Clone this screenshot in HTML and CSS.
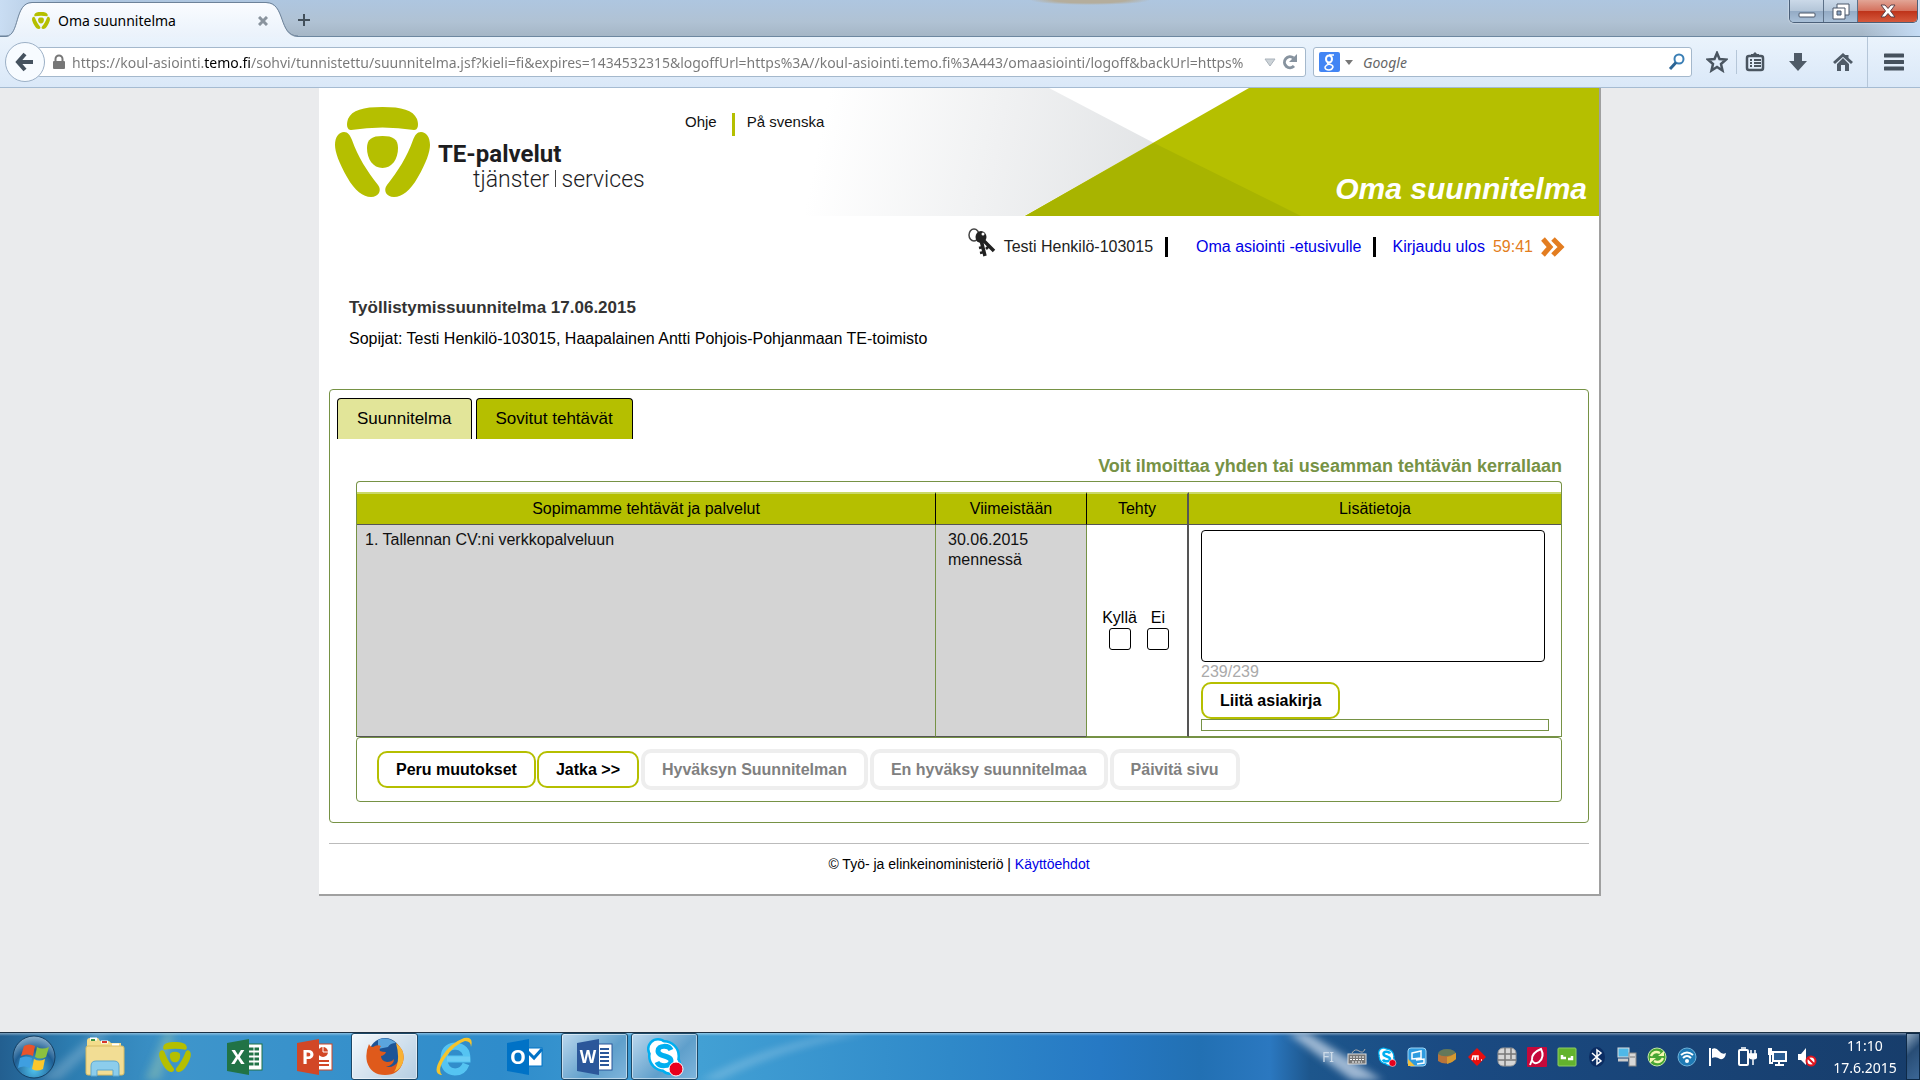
FILE: index.html
```
<!DOCTYPE html>
<html lang="fi">
<head>
<meta charset="utf-8">
<title>Oma suunnitelma</title>
<link rel="stylesheet" href="styles.css">
</head>
<body>
<svg class="defs" aria-hidden="true">
  <symbol id="te-mark" viewBox="0 0 95 90">
    <path d="M16 23C12 23 11 18 13 12C17 3 28 0 47.500 0C67 0 78 3 82 12C84 18 83 23 79 23Q47.500 18 16 23z"/>
    <path d="M9 25C13 25 15 28 17 33C23 50 32 64 43 78C47 83 44 90 36 90C28 90 20 84 12 70C4 56 0 45 0 38C0 30 4 25 9 25z"/>
    <path d="M86 25C82 25 80 28 78 33C72 50 63 64 52 78C48 83 51 90 59 90C67 90 75 84 83 70C91 56 95 45 95 38C95 30 91 25 86 25z"/>
    <path d="M47.500 29C58 29 63 32 63 41C63 52 57 61 47.500 61C38 61 32 52 32 41C32 32 37 29 47.500 29z"/>
  </symbol>
  <symbol id="skype" viewBox="0 0 40 40">
    <circle cx="13" cy="12" r="11" fill="#00aff0"/><circle cx="25" cy="27" r="11" fill="#00aff0"/><circle cx="19" cy="19" r="16" fill="#00aff0"/>
    <circle cx="13" cy="12" r="8.500" fill="#fff"/><circle cx="25" cy="27" r="8.500" fill="#fff"/><circle cx="19" cy="19" r="13.500" fill="#fff"/>
    <path d="M26 13C24 8 13 8 13 14C13 20 26 18 26 24C26 30 14 30 12 25" fill="none" stroke="#00aff0" stroke-width="5"/>
    <circle cx="31" cy="32" r="7" fill="#e8001c" stroke="#fff"/>
  </symbol>
</svg>

<header class="chrome">
  <div class="titlebar">
    <div class="tab">
      <svg class="tab-shape" viewBox="0 0 300 37" aria-hidden="true">
        <defs><linearGradient id="tg" x1="0" y1="0" x2="0" y2="1"><stop offset="0" stop-color="#fafcff"/><stop offset="1" stop-color="#eaf2fb"/></linearGradient></defs>
        <path d="M0 37H6C20 37 14 3 32 3H266C286 3 278 37 298 37z" fill="url(#tg)"/>
        <path d="M0 36H6C20 36 14 2.500 32 2.500H266C286 2.500 278 36 298 36" fill="none" stroke="#6d8299"/>
      </svg>
      <svg class="favicon" fill="#b5bf00" aria-hidden="true"><use href="#te-mark"/></svg>
      <span class="tab-title">Oma suunnitelma</span>
      <button class="plain" aria-label="Sulje välilehti"><svg width="10" height="10" viewBox="0 0 10 10"><path d="M1 1L9 9M9 1L1 9" stroke="#8a949e" stroke-width="3"/></svg></button>
    </div>
    <button class="plain new-tab" aria-label="Uusi välilehti"><svg width="14" height="14" viewBox="0 0 14 14"><path d="M7 1V13M1 7H13" stroke="#424f5a" stroke-width="2"/></svg></button>
    <div class="window-buttons">
      <button aria-label="Pienennä"><svg width="18" height="6" viewBox="0 0 18 6"><rect x="1" y="1" width="16" height="4" rx="1" fill="#fff" stroke="#4b5668"/></svg></button>
      <button aria-label="Palauta"><svg width="18" height="17" viewBox="0 0 18 17"><path d="M5 1H17V12H5z" fill="#fff" stroke="#4b5668"/><path d="M1 5H13V16H1z" fill="#fff" stroke="#4b5668"/><path d="M5 8H9V12H5z" fill="#8ba5c4" stroke="#4b5668"/></svg></button>
      <button class="close" aria-label="Sulje"><svg width="16" height="14" viewBox="0 0 16 14"><path d="M1 1H5L8 4.500L11 1H15L10.500 7L15 13H11L8 9.500L5 13H1L5.500 7z" fill="#fff" stroke="#5b4048"/></svg></button>
    </div>
  </div>
  <div class="toolbar">
    <button class="back" aria-label="Takaisin"><svg width="20" height="20" viewBox="0 0 20 20"><path d="M10 2L3 10L10 18M4 10H18" fill="none" stroke="#45525f" stroke-width="4"/></svg></button>
    <div class="url">
      <svg width="14" height="16" viewBox="0 0 14 16" aria-hidden="true"><path d="M3.500 8V5a3.500 3.500 0 0 1 7 0V8" fill="none" stroke="#777" stroke-width="2"/><rect x="1" y="7" width="12" height="8" rx="1" fill="#777"/></svg>
      <input class="url-field" aria-label="Osoite" value="https://koul-asiointi.temo.fi/sohvi/tunnistettu/suunnitelma.jsf?kieli=fi&amp;expires=1434532315&amp;logoffUrl=https%3A//koul-asiointi.temo.fi%3A443/omaasiointi/logoff&amp;backUrl=https%">
      <svg width="12" height="9" viewBox="0 0 12 9" aria-hidden="true"><path d="M1 1H11L6 8z" fill="#ccd3d8" stroke="#aab3bb"/></svg>
      <button class="plain" aria-label="Päivitä"><svg width="16" height="16" viewBox="0 0 16 16"><path d="M12 12A5.500 5.500 0 1 1 11.500 4" fill="none" stroke="#87939f" stroke-width="3"/><path d="M15 0V8H7z" fill="#87939f"/></svg></button>
    </div>
    <div class="search">
      <svg width="21" height="20" viewBox="0 0 21 20" aria-hidden="true"><rect width="21" height="20" rx="2" fill="#4285f4"/><g fill="none" stroke="#fff"><ellipse cx="10" cy="7" rx="3" ry="3.500" stroke-width="2"/><path d="M10 3H15M9 10Q8 12 10 12Q14 13 14 15Q13 18 10 18Q6 18 6 15Q7 13 10 12" stroke-width="1.500"/></g></svg>
      <svg width="8" height="5" viewBox="0 0 8 5" aria-hidden="true"><path d="M0 0H8L4 5z" fill="#777"/></svg>
      <input class="search-field" aria-label="Haku" placeholder="Google">
      <svg width="18" height="18" viewBox="0 0 18 18" aria-hidden="true"><circle cx="11" cy="6" r="4.500" fill="none" stroke="#3b7fb5" stroke-width="2"/><path d="M8 9.500L2 16" stroke="#2c6494" stroke-width="3"/></svg>
    </div>
    <nav class="tools">
      <button class="plain" aria-label="Kirjanmerkki"><svg width="22" height="22" viewBox="0 0 22 22"><path d="M11 2L13.500 8L20 8.500L15 13L16.500 19.500L11 16L5.500 19.500L7 13L2 8.500L8.500 8z" fill="none" stroke="#4a5560" stroke-width="2.500"/></svg></button>
      <span class="rule"></span>
      <button class="plain" aria-label="Kirjanmerkit"><svg width="20" height="20" viewBox="0 0 20 20"><rect x="2" y="4" width="16" height="14" rx="2" fill="none" stroke="#4a5560" stroke-width="2.500"/><path d="M6 5V2H8L10 0L12 2H14V5z" fill="#4a5560"/><path d="M5 8H7M9 8H16M5 11H7M9 11H16M5 14H7M9 14H16" stroke="#4a5560" stroke-width="2"/></svg></button>
      <button class="plain" aria-label="Lataukset"><svg width="18" height="20" viewBox="0 0 18 20"><path d="M5 1H13V9H18L9 19L0 9H5z" fill="#4f5b67"/></svg></button>
      <button class="plain" aria-label="Koti"><svg width="20" height="20" viewBox="0 0 20 20"><path d="M1 11L10 3L19 11M14 3V6" fill="none" stroke="#4f5b67" stroke-width="3"/><path d="M4 12L10 6L16 12V19H12V13H8V19H4z" fill="#4f5b67"/></svg></button>
      <span class="rule tall"></span>
      <button class="plain" aria-label="Valikko"><svg width="20" height="18" viewBox="0 0 20 18"><path d="M1 2.500H19M1 9H19M1 15.500H19" stroke="#45515d" stroke-width="4" stroke-linecap="round"/></svg></button>
    </nav>
  </div>
</header>

<main class="viewport">
  <div class="page">
    <div class="banner">
      <svg class="banner-art" viewBox="0 0 820 128" preserveAspectRatio="none" aria-hidden="true">
        <defs><linearGradient id="gg" gradientUnits="userSpaceOnUse" x1="30" y1="100" x2="360" y2="170"><stop offset="0" stop-color="#fff"/><stop offset="1" stop-color="#e2e4e6"/></linearGradient></defs>
        <path d="M0 0H270L375 55L245 128H0z" fill="url(#gg)"/>
        <path d="M470 0H820V128H246z" fill="#b5bf00"/>
        <path d="M375 55L522 128H246z" fill="#a8b400"/>
      </svg>
      <a class="brand" href="#">
        <svg class="brand-mark" fill="#b5bf00" aria-hidden="true"><use href="#te-mark"/></svg>
        <span class="brand-text"><strong>TE-palvelut</strong><span>tjänster <i></i> services</span></span>
      </a>
      <nav class="lang"><a href="#">Ohje</a><span></span><a href="#">På svenska</a></nav>
      <h1>Oma suunnitelma</h1>
    </div>

    <div class="user-row">
      <svg width="28" height="30" viewBox="0 0 28 30" aria-hidden="true"><ellipse cx="6" cy="7" rx="5" ry="6" fill="none" stroke="#444" stroke-width="1.500"/><ellipse cx="13" cy="9" rx="5.500" ry="6" fill="#222"/><circle cx="15" cy="6" r="1.500" fill="#fff"/><path d="M14 11L26 23M13 12L17 28" stroke="#222" stroke-width="3.500"/><path d="M18 21L21 18M11 20L15 19M12 25L16 24" stroke="#222" stroke-width="2.500"/></svg>
      <span class="user">Testi Henkilö-103015</span><span class="bar"></span>
      <a class="home-link" href="#">Oma asiointi -etusivulle</a><span class="bar"></span>
      <a href="#">Kirjaudu ulos</a><span class="timer">59:41</span>
      <svg width="24" height="20" viewBox="0 0 24 20" aria-hidden="true"><path d="M2 2L9 10L2 18M12 2L20 10L12 18" fill="none" stroke="#e37d20" stroke-width="5"/></svg>
    </div>

    <section class="intro">
      <h2>Työllistymissuunnitelma 17.06.2015</h2>
      <p>Sopijat: Testi Henkilö-103015, Haapalainen Antti Pohjois-Pohjanmaan TE-toimisto</p>
    </section>

    <section class="panel">
      <div class="tabs"><button class="inactive">Suunnitelma</button><button>Sovitut tehtävät</button></div>
      <div class="panel-body">
        <p class="hint">Voit ilmoittaa yhden tai useamman tehtävän kerrallaan</p>
        <div class="tasks">
          <table>
            <colgroup><col><col class="c-date"><col class="c-done"><col class="c-info"></colgroup>
            <thead><tr><th>Sopimamme tehtävät ja palvelut</th><th>Viimeistään</th><th>Tehty</th><th>Lisätietoja</th></tr></thead>
            <tbody><tr>
              <td class="task">1. Tallennan CV:ni verkkopalveluun</td>
              <td class="date">30.06.2015 mennessä</td>
              <td class="done"><div class="checks"><label>Kyllä<input type="checkbox"></label><label>Ei<input type="checkbox"></label></div></td>
              <td class="info">
                <textarea aria-label="Lisätietoja"></textarea>
                <div class="counter">239/239</div>
                <button class="btn">Liitä asiakirja</button>
                <div class="files"></div>
              </td>
            </tr></tbody>
          </table>
        </div>
        <div class="actions">
          <button class="btn">Peru muutokset</button>
          <button class="btn">Jatka &gt;&gt;</button>
          <button class="btn" disabled>Hyväksyn Suunnitelman</button>
          <button class="btn" disabled>En hyväksy suunnitelmaa</button>
          <button class="btn" disabled>Päivitä sivu</button>
        </div>
      </div>
    </section>

    <footer class="page-footer">© Työ- ja elinkeinoministeriö | <a href="#">Käyttöehdot</a></footer>
  </div>
</main>

<footer class="taskbar">
  <svg class="streaks" viewBox="0 0 1920 48" preserveAspectRatio="none" aria-hidden="true">
    <defs><filter id="soft"><feGaussianBlur stdDeviation="4"/></filter></defs>
    <g filter="url(#soft)"><path d="M40 48L95 0H110L60 48z" fill="#fff" opacity=".2"/><path d="M145 48L165 0H175L160 48z" fill="#cfe9a0" opacity=".3"/><path d="M720 48Q790 12 870 0H840Q760 14 700 48z" fill="#fff" opacity=".2"/><path d="M1288 0H1308L1382 48H1352z" fill="#d5e2f2" opacity=".7"/></g>
  </svg>
  <button class="start" aria-label="Käynnistä"><svg width="44" height="44" viewBox="0 0 44 44">
    <defs><radialGradient id="orb" cx=".5" cy=".8" r=".8"><stop offset="0" stop-color="#4fc3ee"/><stop offset=".6" stop-color="#1f5e94"/><stop offset="1" stop-color="#8fb4cf"/></radialGradient></defs>
    <circle cx="22" cy="22" r="21" fill="url(#orb)" stroke="#153f63"/>
    <path d="M12 11Q17 8 23 11L21 21Q15 18 9 21z" fill="#e8542b"/><path d="M25 12Q30 15 37 12L34 22Q28 25 23 22z" fill="#8cc13f"/><path d="M8 23Q14 20 20 23L18 33Q12 30 6 33z" fill="#3f9fe0"/><path d="M22 24Q27 27 33 24L31 34Q25 37 20 34z" fill="#fcc72c"/>
  </svg></button>
  <button class="app" aria-label="Resurssienhallinta"><svg width="40" height="40" viewBox="0 0 40 40"><path d="M2 4Q2 1 5 1H13L15 4H24L26 6H36V12H2z" fill="#f3dc8b"/><path d="M5 2H12M16 5H23M27 8H34" stroke="#fff" stroke-width="3"/><path d="M6 3H10" stroke="#3d9440" stroke-width="2"/><path d="M17 5H22" stroke="#d8362a" stroke-width="2"/><rect x="1" y="9" width="38" height="29" rx="2" fill="#f2dd94" stroke="#d7bb63"/><path d="M6 39V29Q6 24 11 24H29Q34 24 34 29V39H28V33H12V39z" fill="#8ccdec" stroke="#5da7cf"/></svg></button>
  <button class="app" aria-label="TE-palvelut"><svg width="32" height="30" fill="#b5bf00"><use href="#te-mark"/></svg></button>
  <button class="app" aria-label="Excel"><svg width="36" height="36" viewBox="0 0 36 36"><rect x="18" y="5" width="17" height="26" fill="#fff" stroke="#217346"/><path d="M22 10H32M22 15H32M22 20H32M22 25H32" stroke="#217346" stroke-width="3"/><path d="M27 7V29" stroke="#fff"/><path d="M0 4L22 0V36L0 32z" fill="#217346"/><text x="11" y="25" text-anchor="middle" class="glyph">X</text></svg></button>
  <button class="app" aria-label="PowerPoint"><svg width="36" height="36" viewBox="0 0 36 36"><rect x="18" y="5" width="17" height="26" fill="#fff" stroke="#d24726"/><circle cx="26" cy="13" r="5" fill="#d24726"/><path d="M26 13V7M26 13H32" stroke="#fff"/><path d="M22 22H32M22 26H32" stroke="#d24726" stroke-width="2"/><path d="M0 4L22 0V36L0 32z" fill="#d24726"/><text x="11" y="25" text-anchor="middle" class="glyph">P</text></svg></button>
  <button class="app open active" aria-label="Firefox"><svg width="40" height="38" viewBox="0 0 40 38">
    <circle cx="20" cy="16" r="16" fill="#1d5496"/><path d="M13 2Q22 -2 31 5Q25 5 23 9L13 11z" fill="#5ba5dd"/>
    <path d="M4 6Q5 9 8 9Q12 6 16 8Q14 10 15 13Q17 14 21 14Q20 17 16 18Q16 23 22 24Q27 24 29 21Q29 27 21 29Q30 30 34 22Q36 13 31 5Q41 13 38 24Q34 37 20 37Q6 37 2 24Q0 15 4 6z" fill="#df5a1b"/>
    <path d="M31 5Q41 13 38 24Q36 31 29 34Q36 23 31 5z" fill="#f9b234"/></svg></button>
  <button class="app" aria-label="Internet Explorer"><svg width="40" height="40" viewBox="0 0 40 40"><path d="M31 27Q28 35 20 35Q9 34 9 22Q9 10 20 9Q32 10 32 22H12" fill="none" stroke="#55c4f2" stroke-width="7"/><path d="M12 22H35" stroke="#6bcdf5" stroke-width="5"/><path d="M6 38Q-3 36 6 21Q15 6 29 1Q39 -1 36 10Q36 4 30 4Q20 7 10 21Q2 33 7 38z" fill="#f5c42c"/></svg></button>
  <button class="app" aria-label="Outlook"><svg width="36" height="36" viewBox="0 0 36 36"><rect x="18" y="9" width="17" height="18" fill="#fff" stroke="#0072c6"/><path d="M19 11L27 19L35 10" fill="none" stroke="#0072c6" stroke-width="3"/><path d="M0 4L22 0V36L0 32z" fill="#0072c6"/><text x="11" y="25" text-anchor="middle" class="glyph">O</text></svg></button>
  <button class="app open" aria-label="Word"><svg width="36" height="36" viewBox="0 0 36 36"><rect x="18" y="5" width="17" height="26" fill="#fff" stroke="#2b579a"/><path d="M23 10H32M23 14H32M23 18H32M23 22H32M23 26H32" stroke="#2b579a" stroke-width="2"/><path d="M0 4L22 0V36L0 32z" fill="#2b579a"/><text x="11" y="24" text-anchor="middle" class="glyph small">W</text></svg></button>
  <button class="app open" aria-label="Skype"><svg width="40" height="40"><use href="#skype"/></svg></button>

  <div class="tray">
    <span class="ime">FI</span>
    <svg viewBox="0 0 20 20"><path d="M5 6Q8 1 12 4T18 2" fill="none" stroke="#aaa"/><rect x="1" y="7" width="18" height="10" fill="#777" stroke="#ddd"/><path d="M3 10H17M3 12.500H17M5 15H15" stroke="#fff" stroke-dasharray="2 1"/></svg>
    <svg><use href="#skype"/></svg>
    <svg viewBox="0 0 20 20"><rect x="1" y="1" width="18" height="18" rx="3" fill="#2e9be0" stroke="#9ed5f5"/><path d="M5 6L14 4V11L5 12zM9 13L17 12V16L10 17" fill="none" stroke="#fff" stroke-width="1.500"/><path d="M1 12L8 19H1z" fill="#f0c040"/></svg>
    <svg viewBox="0 0 20 20"><ellipse cx="10" cy="7" rx="9" ry="5" fill="#64785a"/><path d="M1 7Q8 12 19 6V12Q10 20 1 14z" fill="#b8743a"/><path d="M10 10Q15 9 19 6V12Q15 16 10 17z" fill="#d59a31"/></svg>
    <svg viewBox="0 0 20 20"><path d="M10 1L19 10L10 19L1 10z" fill="#e60f0f"/><path d="M5 13L6 9L8 9L8 13L9 9L11 9L11 13M14 13H15" fill="none" stroke="#fff" stroke-width="1.500"/></svg>
    <svg viewBox="0 0 20 20"><rect x="1" y="1" width="18" height="18" rx="5" fill="#d6d6d6" stroke="#999"/><path d="M8 1V19M14 1V12M1 7H19M1 13H19" stroke="#777" stroke-width="1.500"/></svg>
    <svg viewBox="0 0 20 20"><rect width="20" height="20" rx="1" fill="#c5093b"/><path d="M14 2Q4 6 5 13Q7 18 12 15Q18 10 14 2zM5 13L3 18" fill="none" stroke="#fff" stroke-width="2"/></svg>
    <svg viewBox="0 0 20 20"><rect x="1" y="1" width="18" height="18" rx="1" fill="#63b32e" stroke="#8fce63"/><path d="M5 8V11H9M11 12H15V9" fill="none" stroke="#fff" stroke-width="2.500"/></svg>
    <svg viewBox="0 0 20 20"><ellipse cx="10" cy="10" rx="8" ry="10" fill="#0b2d63"/><path d="M5 6L14 14L10 17V3L14 6L5 14" fill="none" stroke="#fff" stroke-width="1.500"/></svg>
    <svg viewBox="0 0 20 20"><rect x="1" y="1" width="11" height="9" fill="#4fb8e8" stroke="#ddd"/><path d="M1 13H11" stroke="#ccc" stroke-width="3"/><rect x="12" y="6" width="7" height="13" fill="#d8d8d8" stroke="#888"/><path d="M13 10H18" stroke="#777"/></svg>
    <svg viewBox="0 0 20 20"><circle cx="10" cy="10" r="9" fill="#48a632" stroke="#c4e8a5"/><path d="M4 9Q7 3 13 6M16 11Q13 17 7 14" fill="none" stroke="#f4f7b0" stroke-width="2.500"/><path d="M11 9H17V4zM9 11H3V16z" fill="#f4f7b0"/></svg>
    <svg viewBox="0 0 20 20"><circle cx="10" cy="10" r="9" fill="#1f7ab5" stroke="#6fb2da"/><path d="M4 8Q10 3 16 8M6 11Q10 7 14 11" fill="none" stroke="#fff" stroke-width="2"/><circle cx="10" cy="14" r="2" fill="#fff"/></svg>
    <svg viewBox="0 0 20 20"><path d="M3 1V19" stroke="#fff" stroke-width="2"/><path d="M5 2Q9 0 12 4Q15 8 19 6Q18 13 13 12Q9 9 5 11z" fill="#fff"/></svg>
    <svg viewBox="0 0 20 20"><rect x="2" y="3" width="9" height="15" rx="1" fill="none" stroke="#fff" stroke-width="2"/><path d="M4 1H9M14 3V7M18 3V7M12 7H20V10Q19 12 16 12Q13 12 12 10zM16 12V18" fill="#fff" stroke="#fff" stroke-width="1.500"/></svg>
    <svg viewBox="0 0 20 20"><rect x="6" y="5" width="13" height="9" fill="#2b5d92" stroke="#fff" stroke-width="2"/><path d="M8 18H17M12 14V18M3 8V16H6" fill="none" stroke="#fff" stroke-width="2"/><rect x="1" y="1" width="4" height="7" fill="#fff"/></svg>
    <svg viewBox="0 0 20 20"><path d="M1 7H4L9 1V18L4 13H1z" fill="#fff"/><circle cx="14" cy="14" r="4.500" fill="#fff" stroke="#e0141e" stroke-width="2"/><path d="M11 11L17 17" stroke="#e0141e" stroke-width="2"/></svg>
    <time class="clock"><span>11:10</span><span>17.6.2015</span></time>
  </div>
  <button class="show-desktop" aria-label="Näytä työpöytä"></button>
</footer>
</body>
</html>
```
FILE: styles.css
```
* { box-sizing: border-box; }
body {
  margin: 0;
  min-height: 100vh;
  display: flex;
  flex-direction: column;
  background: #eaebed;
  color: #000;
  font-family: "Liberation Sans", Arial, sans-serif;
  font-size: 16px;
  line-height: 20px;
}
button, input, textarea { font: inherit; color: inherit; }
svg { display: block; flex: none; }
h1, h2, p { margin: 0; }
.defs { position: absolute; width: 0; height: 0; }
.plain { padding: 0; border: 0; background: none; }

/* Browser frame */
.chrome { font-family: "Noto Sans", "Open Sans", sans-serif; font-size: 14px; }
.titlebar {
  display: flex;
  height: 37px;
  background: linear-gradient(90deg, #c9ddf3 0, transparent 60px), radial-gradient(ellipse 60px 5px at 1090px 0, #b4ad9c 60%, transparent), linear-gradient(90deg, transparent 97%, #c5dcf5), linear-gradient(#aec6e0, #b0c2d4 60%, #a5b6c6);
  border-bottom: 1px solid #6d87a0;
}
.tab {
  position: relative;
  display: flex;
  align-items: center;
  width: 297px;
  padding: 5px 29px 0 32px;
  gap: 8px;
}
.tab > * { position: relative; }
.tab > .tab-shape { position: absolute; left: 0; top: 0; width: 300px; height: 37px; }
.favicon { width: 18px; height: 17px; }
.tab-title { flex: 1; }
.new-tab { padding: 3px 0 0; }
.window-buttons { display: flex; margin: 0 2px 0 auto; height: 23px; border: 1px solid #4b6079; border-top: 0; border-radius: 0 0 5px 5px; overflow: hidden; box-shadow: 0 0 2px #fff; }
.window-buttons button {
  display: grid;
  place-items: center;
  width: 34px;
  padding: 0;
  border: 0;
  border-right: 1px solid #5c7087;
  background: linear-gradient(#cbd9e8, #b3c5d8 50%, #93aac4 50%, #a9c0d8);
}
.window-buttons .close { width: 59px; border: 0; background: linear-gradient(#e2a596, #d4705c 50%, #be3219 50%, #d5593c); }
.window-buttons button:first-child { padding-top: 8px; }
.toolbar {
  display: flex;
  align-items: center;
  height: 51px;
  padding-left: 5px;
  background: linear-gradient(#eaf3fc, #dae8f8);
  border-bottom: 1px solid #a5bbd2;
}
.back { z-index: 1; display: grid; place-items: center; width: 40px; height: 40px; padding: 0; border: 1px solid #9cb0c6; border-radius: 50%; background: #f7fbff; }
.url, .search { display: flex; align-items: center; height: 30px; border: 1px solid #a4b8cc; border-radius: 3px; background: #fff; }
.url { flex: 1; margin-left: -8px; padding: 0 7px 0 14px; gap: 6px; }
.url-field, .search-field { flex: 1; min-width: 0; height: 28px; padding: 0; border: 0; outline: 0; }
/* The host name is darker than the rest of the address */
.url-field {
  color: transparent;
  background: linear-gradient(90deg, #777 132px, #000 132px, #000 179px, #777 179px);
  background-clip: text;
  -webkit-background-clip: text;
}
.search { width: 379px; margin: 0 14px 0 7px; padding: 0 5px; gap: 5px; }
.search-field { padding-left: 5px; font-style: italic; background: none; }
.search-field::placeholder { color: #666; opacity: 1; }
.tools { display: flex; align-items: center; align-self: stretch; padding-right: 16px; }
.tools .rule { width: 1px; height: 24px; margin: 0 8px; background: #b5c6d8; }
.tools .rule + button { margin-right: 24px; }
.tools .rule.tall { height: 50px; margin: 0 16px 0 14px; }
.tools .rule.tall + button { margin: 0; }
.tools button:nth-of-type(3) { margin-right: 26px; }

/* Page */
.viewport { flex: 1; }
.page { max-width: 1282px; margin: 0 auto; padding-bottom: 20px; background: #fff; border: solid #a0a0a0; border-width: 0 2px 2px 0; }
.banner { position: relative; display: flex; height: 128px; }
.banner > * { position: relative; }
.banner > .banner-art { position: absolute; right: 0; top: 0; width: 820px; height: 128px; }
.banner h1 { align-self: flex-end; margin-left: auto; padding: 0 12px 10px 0; color: #fff; font-size: 30px; line-height: 34px; font-style: italic; }
.brand { display: flex; width: 366px; padding: 19px 0 0 16px; gap: 8px; color: #1d1d1f; text-decoration: none; }
.brand-mark { width: 95px; height: 90px; }
.brand-text { display: flex; flex-direction: column; padding-top: 35px; font-family: Roboto, sans-serif; font-size: 24px; line-height: 25px; white-space: nowrap; }
.brand-text > span { padding-left: 35px; font-size: 23px; font-weight: 300; }
.brand-text i { display: inline-block; width: 1px; height: 17px; background: #444; }
.lang { display: flex; align-items: flex-start; padding-top: 24px; gap: 12px; font-size: 15px; }
.lang span { width: 3px; height: 23px; margin: 1px 0 0 3px; background: #b5bf00; }
.lang a { color: #111; }
a { color: #0000e6; text-decoration: none; }
.user-row { display: flex; justify-content: flex-end; align-items: center; padding: 12px 34px 0 0; color: #222; }
.user-row > :not(svg:first-child) { margin-top: 7px; }
.user { margin-left: 8px; }
.bar { width: 3px; height: 20px; margin: 0 16px 0 12px; background: #000; }
.home-link { margin-left: 12px; }
.timer { margin: 0 8px; color: #e37d20; }
.intro { padding: 40px 30px 0; }
.intro h2 { color: #333; font-size: 17px; line-height: 20px; }
.intro p { padding-top: 11px; }
.panel { margin: 40px 10px 0; padding: 8px 7px 20px; border: 1px solid #769245; border-radius: 4px; }
.tabs { display: flex; gap: 4px; }
.tabs button { height: 41px; padding: 0 19px; border: 1px solid #000; border-bottom: 0; border-radius: 4px 4px 0 0; background: #b5bf00; font-size: 17px; }
.tabs .inactive { background: #e2e599; }
.panel-body { padding: 17px 19px 0; }
.hint { padding-bottom: 5px; color: #769245; font-size: 18px; font-weight: bold; text-align: right; }
.tasks { padding-top: 10px; border: 1px solid #769245; border-bottom: 0; border-radius: 4px 4px 0 0; }
table { width: 100%; table-layout: fixed; border-collapse: separate; border-spacing: 0; }
.c-date { width: 151px; }
.c-done { width: 102px; }
.c-info { width: 372px; }
th { height: 33px; padding: 0; border-top: 2px solid #cad969; border-bottom: 1px solid #555; border-right: 1px solid #000; background: #b5bf00; font-weight: normal; }
th:nth-child(3) { border-right: 2px solid #555; }
th:last-child { border-right: 0; }
td { padding: 5px 12px; vertical-align: top; border-right: 1px solid #769245; border-bottom: 1px solid #555; }
.task, .date { background: #d4d4d4; color: #111; }
.task { padding-left: 8px; }
.done { padding: 0 3px 4px 0; vertical-align: middle; border-right: 2px solid #555; border-bottom-color: #769245; }
.info { border-right: 0; border-bottom-color: #769245; }
.checks { display: flex; justify-content: center; gap: 10px; }
.checks label { display: flex; flex-direction: column; align-items: center; }
input[type="checkbox"] { appearance: none; width: 22px; height: 22px; margin: 0; border: 1px solid #000; border-radius: 3px; background: #fff; }
textarea { display: block; width: 344px; max-width: 100%; height: 132px; padding: 4px; border: 1px solid #000; border-radius: 4px; resize: none; background: #fff; }
.counter { color: #aaa; }
.files { height: 12px; border: 1px solid #769245; }
.btn { display: block; height: 37px; padding: 0 17px; border: 2px solid #b5bf00; border-radius: 10px; background: #fff; color: #000; font-weight: bold; white-space: nowrap; }
.btn:disabled { height: 41px; margin-left: 1px; border: 4px solid #eee; color: #808080; }
.actions { display: flex; align-items: center; gap: 1px; height: 65px; padding: 0 20px; border: 1px solid #769245; border-radius: 4px; }
.page-footer { margin: 20px 10px 0; padding-top: 10px; border-top: 1px solid #bbb; text-align: center; font-size: 14px; }

/* Taskbar */
.taskbar {
  position: relative;
  display: flex;
  align-items: center;
  height: 48px;
  padding-left: 12px;
  border-top: 1px solid #1c3144;
  background: linear-gradient(#ffffff66, transparent 3px), linear-gradient(90deg, #235f90 0, #2c7cb0 70px, #3e95cb 180px, #2f8ccb 500px, #42a0d4 700px, #2f89c9 950px, #2679c4 1100px, #2270b3 1200px, #2b78c0 1270px, #1d568c 1310px, #1a4a82 1450px, #173d6b);
}
.taskbar > * { position: relative; }
.taskbar > .streaks { position: absolute; left: 0; top: 0; width: 100%; height: 100%; }
.taskbar button { display: grid; place-items: center; flex: none; padding: 0; border: 0; background: none; }
.start { width: 44px; margin-right: 15px; }
.taskbar .app { width: 67px; height: 47px; margin-right: 3px; border-radius: 3px; }
.taskbar .open { border: 1px solid #1c4867; background: linear-gradient(135deg, #bcd8ee, #5f9fcb 60%, #7fb5dc); box-shadow: inset 0 0 0 1px #ffffff80; }
.taskbar .active { background: linear-gradient(135deg, #f4f8fb, #b4cde2); }
.glyph { fill: #fff; font: bold 20px "Open Sans", sans-serif; }
.glyph.small { font-size: 17px; }
.tray { display: flex; align-items: center; gap: 10px; margin-left: auto; font-family: "Noto Sans", sans-serif; color: #fff; font-size: 14px; }
.tray svg { width: 20px; height: 20px; }
.ime { padding-right: 3px; color: #cddbe8; }
.clock { display: flex; flex-direction: column; width: 64px; margin-left: 6px; align-items: center; line-height: 22px; }
.taskbar .show-desktop { width: 14px; height: 47px; margin-left: 9px; border: 1px solid #0e2a48; background: linear-gradient(135deg, #8fa8c0, #284d76 40%, #3c6796); }
```
